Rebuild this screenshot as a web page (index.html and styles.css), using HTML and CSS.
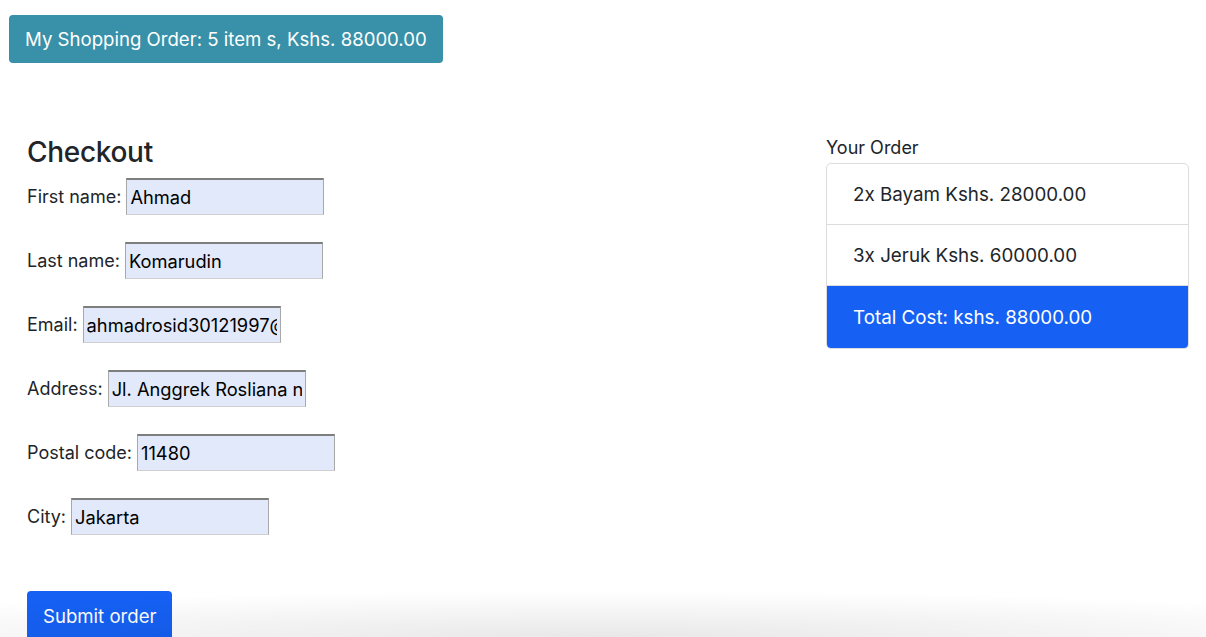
FILE: index.html
```html
<!DOCTYPE html>
<html lang="en">
<head>
<meta charset="utf-8">
<title>Checkout</title>
<link rel="stylesheet" href="styles.css">
</head>
<body>
<header class="topbar">
  <button class="btn btn-order" type="button">My Shopping Order: 5 item s, Kshs. 88000.00</button>
</header>
<main class="page">
  <section class="checkout">
    <h3 class="title">Checkout</h3>
    <form class="form">
      <label class="field">First name: <input class="input" type="text" value="Ahmad"></label>
      <label class="field">Last name: <input class="input" type="text" value="Komarudin"></label>
      <label class="field">Email: <input class="input" type="text" value="ahmadrosid30121997@gmail.com"></label>
      <label class="field">Address: <input class="input" type="text" value="Jl. Anggrek Rosliana no 12"></label>
      <label class="field">Postal code: <input class="input" type="text" value="11480"></label>
      <label class="field">City: <input class="input" type="text" value="Jakarta"></label>
      <div class="actions"><button class="btn btn-primary" type="button">Submit order</button></div>
    </form>
  </section>
  <aside class="summary">
    <div class="summary-title">Your Order</div>
    <ul class="list-group">
      <li class="list-item">2x Bayam Kshs. 28000.00</li>
      <li class="list-item">3x Jeruk Kshs. 60000.00</li>
      <li class="list-item active">Total Cost: kshs. 88000.00</li>
    </ul>
  </aside>
</main>
<div class="bottom-shade"></div>
</body>
</html>
```
FILE: styles.css
```css
* { box-sizing: border-box; }
html, body { margin: 0; padding: 0; background: #fff; }
body {
  font-family: Inter, "Noto Sans", "Liberation Sans", sans-serif;
  color: #212529;
  font-size: 18px;
  overflow: hidden;
  height: 637px;
}
.topbar { padding: 15px 9px 0; }
.btn {
  font-family: inherit;
  border: 0;
  color: #fff;
  cursor: pointer;
}
.btn-order {
  background: #3891a8;
  font-size: 18.6px;
  height: 48px;
  padding: 0 16px;
  border-radius: 4px;
  letter-spacing: 0;
}
.page {
  display: flex;
  justify-content: space-between;
  padding: 72px 17px 0 27px;
}
.title {
  margin: 0 0 9px;
  font-size: 28px;
  font-weight: 500;
  line-height: 34px;
  letter-spacing: -0.3px;
}
.form { display: flex; flex-direction: column; gap: 28px; }
.field {
  display: flex;
  align-items: center;
  gap: 5px;
  height: 36px;
  font-size: 18px;
  letter-spacing: 0;
}
.input {
  width: 198px;
  height: 37px;
  font-family: inherit;
  font-size: 18.3px;
  color: #000;
  padding: 0 3px;
  background: #e1e9fb;
  border-style: solid;
  border-width: 2px 1px 1px 1px;
  border-color: #7e7e7e #a8a8a8 #cfcfcf #a8a8a8;
  letter-spacing: 0;
}
.actions { padding-top: 29px; }
.btn-primary {
  background: #1661f4;
  font-size: 18.6px;
  height: 50px;
  padding: 0 16px;
  border-radius: 4px;
  letter-spacing: 0;
}
.summary { width: 363px; padding-top: 2px; }
.summary-title {
  font-size: 18px;
  line-height: 22px;
  margin-bottom: 4px;
  letter-spacing: 0;
}
.list-group {
  list-style: none;
  margin: 0;
  padding: 0;
  border: 1px solid #dcdcdc;
  border-radius: 5px;
  overflow: hidden;
}
.list-item {
  height: 61px;
  display: flex;
  align-items: center;
  padding: 0 26px;
  font-size: 18.8px;
  letter-spacing: 0;
  border-bottom: 1px solid #dcdcdc;
}
.list-item.active {
  background: #1661f4;
  color: #fff;
  border-bottom: 0;
  height: 62px;
}
.bottom-shade {
  position: fixed;
  left: 0; right: 0; bottom: 0;
  height: 46px;
  pointer-events: none;
  background: radial-gradient(ellipse 75% 100% at 50% 100%, rgba(0,0,0,0.09), rgba(0,0,0,0) 100%);
}
```
